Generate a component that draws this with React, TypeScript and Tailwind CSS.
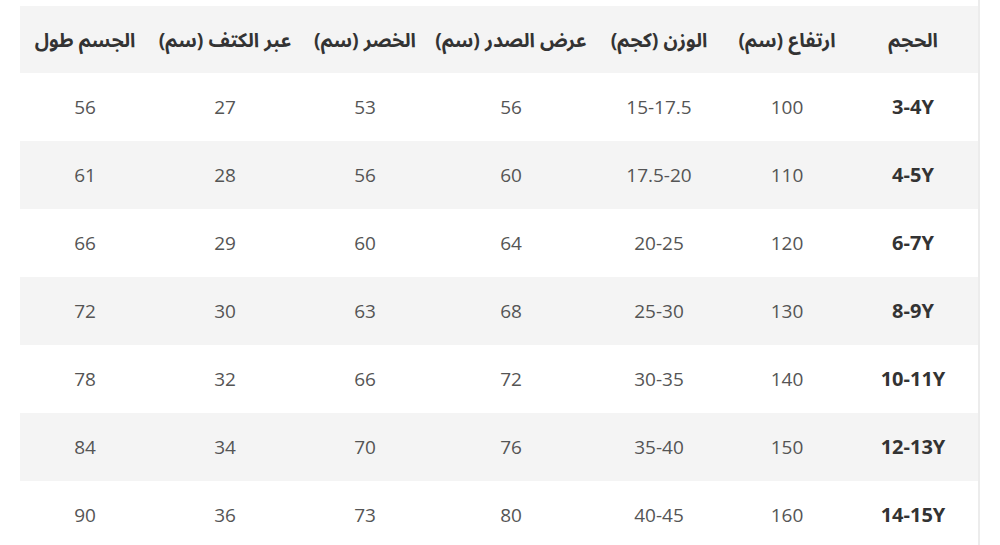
import React from 'react';

const headers = ['الحجم', 'ارتفاع (سم)', 'الوزن (كجم)', 'عرض الصدر (سم)', 'الخصر (سم)', 'عبر الكتف (سم)', 'الجسم طول'];

const rows: string[][] = [
    ['3-4Y', '100', '15-17.5', '56', '53', '27', '56'],
    ['4-5Y', '110', '17.5-20', '60', '56', '28', '61'],
    ['6-7Y', '120', '20-25', '64', '60', '29', '66'],
    ['8-9Y', '130', '25-30', '68', '63', '30', '72'],
    ['10-11Y', '140', '30-35', '72', '66', '32', '78'],
    ['12-13Y', '150', '35-40', '76', '70', '34', '84'],
    ['14-15Y', '160', '40-45', '80', '73', '36', '90'],
];

const widths = ['w-[130px]', 'w-[122px]', 'w-[134px]', 'w-[162px]', 'w-[130px]', 'w-[150px]', 'w-[130px]'];

export default function App() {
    return (
        <div className="w-[1000px] h-[545px] overflow-hidden bg-white font-['Open_Sans','Noto_Sans_Arabic','DejaVu_Sans',sans-serif]">
            <div className="ml-[20px] w-[960px] h-[545px] pt-[6px] border-r-2 border-[#ececec]">
                <table dir="rtl" className="w-[958px] table-fixed border-collapse text-[19px]">
                    <thead>
                        <tr className="h-[67px] bg-[#f4f4f4]">
                            {headers.map((h, i) => (
                                <th key={h} className={`${widths[i]} text-center font-bold text-[19.5px] text-[#333] pt-[1px]`}>{h}</th>
                            ))}
                        </tr>
                    </thead>
                    <tbody>
                        {rows.map((r, ri) => (
                            <tr key={r[0]} className={ri % 2 === 1 ? 'h-[68px] bg-[#f4f4f4]' : 'h-[68px] bg-white'}>
                                {r.map((c, ci) => (
                                    <td
                                        key={ci}
                                        className={ci === 0 ? 'text-center font-bold text-[20px] text-[#333]' : 'text-center text-[#555]'}
                                    >
                                        {c}
                                    </td>
                                ))}
                            </tr>
                        ))}
                    </tbody>
                </table>
            </div>
        </div>
    );
}
